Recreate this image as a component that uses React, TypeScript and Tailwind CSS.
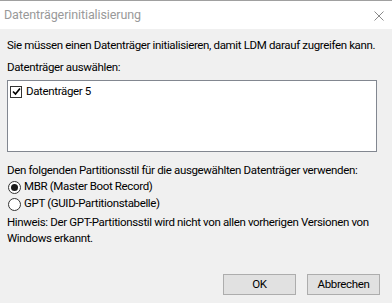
import React from "react";

export default function App() {
  const font = { fontFamily: 'Roboto, "Liberation Sans", sans-serif' };
  return (
    <div
      className="w-[392px] h-[303px] bg-[#f0f0f0] overflow-hidden flex flex-col text-black text-[11.5px] tracking-[-0.35px] leading-none"
      style={font}
    >
      <div className="h-[29px] shrink-0 bg-white border-t border-[#a0a0a0] flex items-center justify-between pl-[4px] pr-[8px]">
        <span className="text-[12.5px] tracking-[-0.1px] text-[#999999]">Datenträgerinitialisierung</span>
        <svg width="10" height="10" viewBox="0 0 10 10" className="mt-[1px]">
          <path d="M0.5 0.5 L9.5 9.5 M9.5 0.5 L0.5 9.5" stroke="#8a8a8a" strokeWidth="1" />
        </svg>
      </div>
      <div className="flex flex-col px-[7px] pt-[10px] whitespace-nowrap">
        <div className="h-[14px] flex items-center">Sie müssen einen Datenträger initialisieren, damit LDM darauf zugreifen kann.</div>
        <div className="h-[14px] mt-[8px] flex items-center">Datenträger auswählen:</div>
        <div className="mt-[5px] w-[370px] h-[72px] bg-white border border-[#828790] pt-[4px] pl-[2px]">
          <div className="flex items-center gap-[4px] h-[13px]">
            <span className="w-[12px] h-[12px] border border-[#333333] bg-white flex items-center justify-center">
              <svg width="9" height="9" viewBox="0 0 9 9">
                <path d="M1 4.5 L3.5 7 L8 1.5" stroke="#000" strokeWidth="1.7" fill="none" />
              </svg>
            </span>
            <span>Datenträger 5</span>
          </div>
        </div>
        <div className="h-[14px] mt-[12px] flex items-center">Den folgenden Partitionsstil für die ausgewählten Datenträger verwenden:</div>
        <div className="mt-[2px] flex items-center gap-[3px] h-[14px] pl-[1px]">
          <span className="w-[13px] h-[13px] rounded-full border border-[#333333] bg-white flex items-center justify-center">
            <span className="w-[7px] h-[7px] rounded-full bg-[#1a1a1a]" />
          </span>
          <span>MBR (Master Boot Record)</span>
        </div>
        <div className="mt-[3px] flex items-center gap-[3px] h-[14px] pl-[1px]">
          <span className="w-[13px] h-[13px] rounded-full border border-[#333333] bg-white" />
          <span>GPT (GUID-Partitionstabelle)</span>
        </div>
        <div className="mt-[3px] leading-[16px]">
          <div>Hinweis: Der GPT-Partitionsstil wird nicht von allen vorherigen Versionen von</div>
          <div>Windows erkannt.</div>
        </div>
      </div>
      <div className="mt-auto mb-[8px] flex justify-end gap-[11px] pr-[12px]">
        <button className="w-[73px] h-[21px] bg-[#e1e1e1] border border-[#adadad] text-[11.5px] text-black">OK</button>
        <button className="w-[73px] h-[21px] bg-[#e1e1e1] border border-[#adadad] text-[11.5px] text-black">Abbrechen</button>
      </div>
    </div>
  );
}
